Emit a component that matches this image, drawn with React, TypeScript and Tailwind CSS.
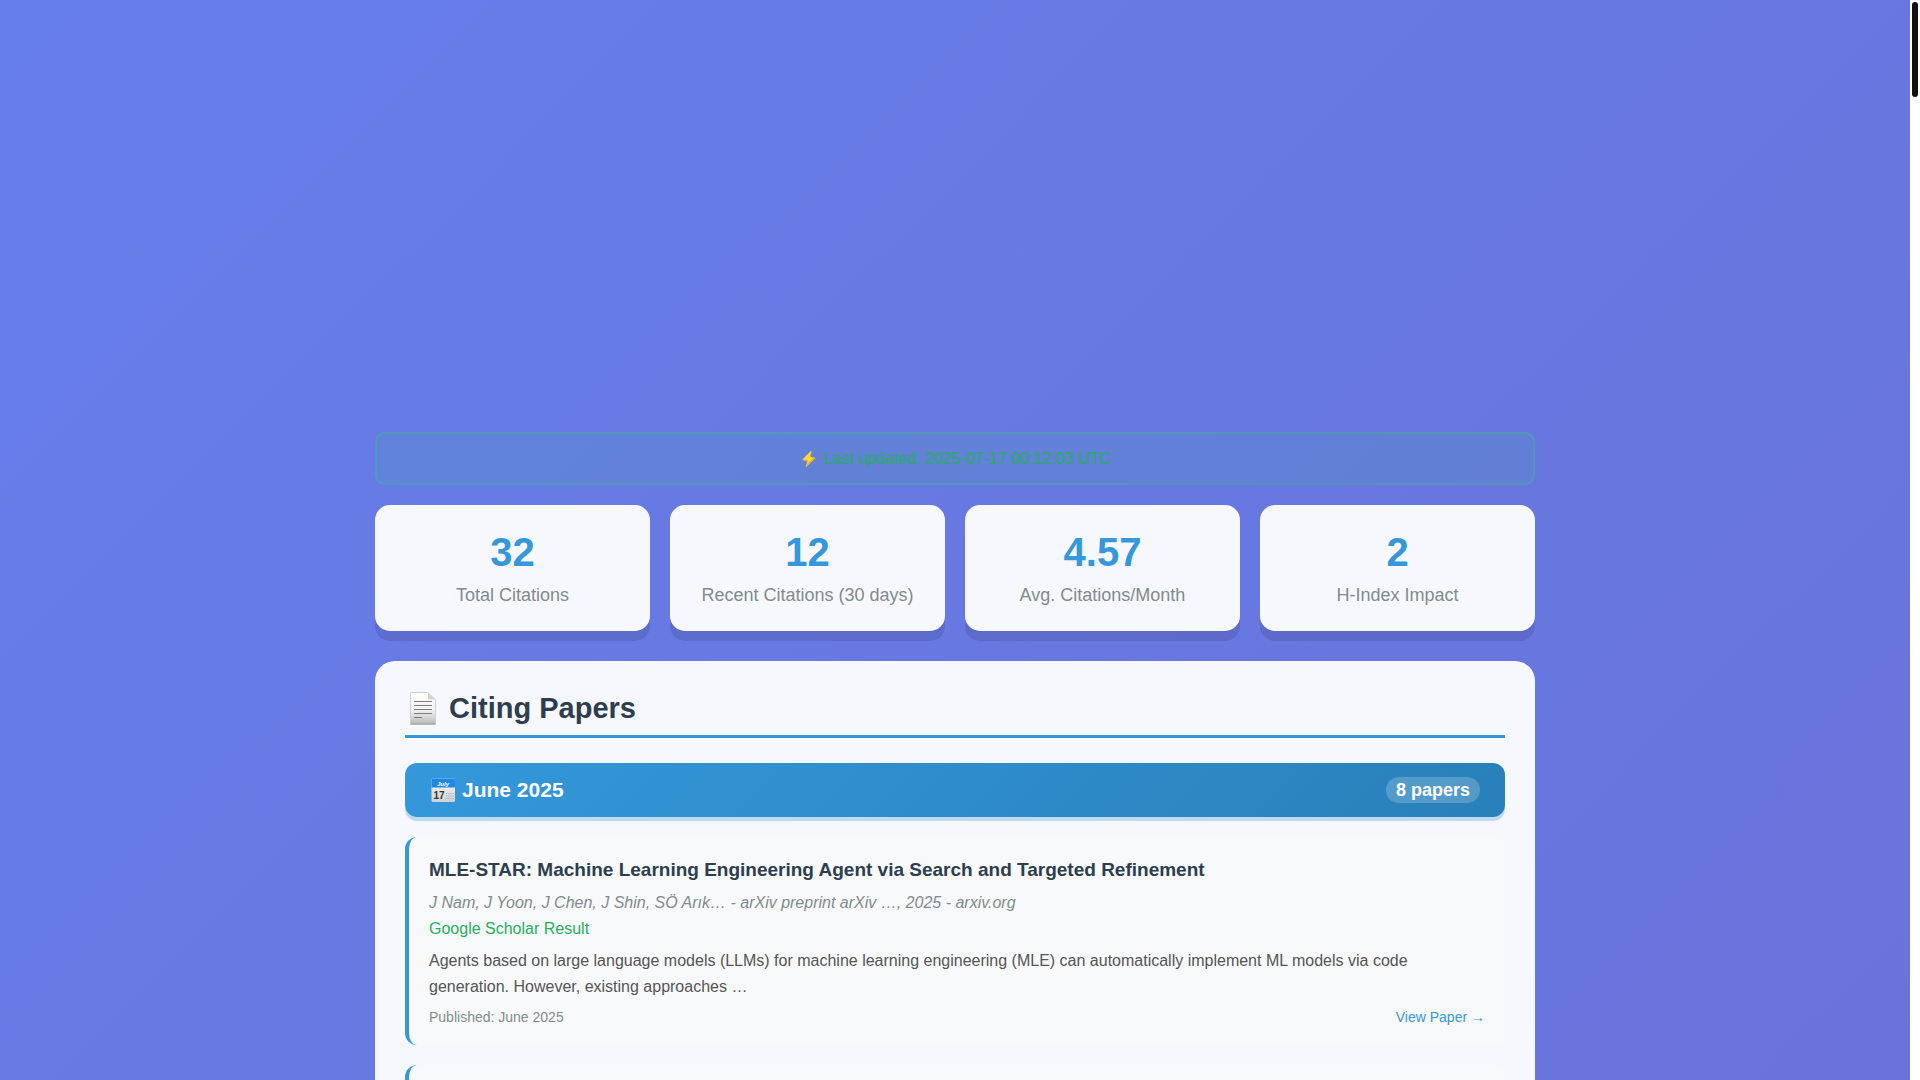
const stats = [
    { value: '32', label: 'Total Citations' },
    { value: '12', label: 'Recent Citations (30 days)' },
    { value: '4.57', label: 'Avg. Citations/Month' },
    { value: '2', label: 'H-Index Impact' }
];

const papers = [
    {
        title: 'MLE-STAR: Machine Learning Engineering Agent via Search and Targeted Refinement',
        authors: 'J Nam, J Yoon, J Chen, J Shin, SÖ Arık… - arXiv preprint arXiv …, 2025 - arxiv.org',
        venue: 'Google Scholar Result',
        abstract: 'Agents based on large language models (LLMs) for machine learning engineering (MLE) can automatically implement ML models via code generation. However, existing approaches …',
        published: 'June 2025'
    }
];

const BoltIcon = () => (
    <svg viewBox="0 0 20 20" className="size-5" aria-hidden="true">
        <path d="M12.6 1.2 3.4 10.4l5.2 1.2-2 6.8 10-9.4-5.6-1.3z" fill="#fdd835" />
        <path d="M3.4 10.4l5.2 1.2-.4 1.2-3.6-1zM6.6 18.4l10-9.4-1.6-.4-6.6 6.4zM12.6 1.2 11 7.7l1 .2z" fill="#f5a623" />
    </svg>
);

const PageIcon = () => (
    <svg viewBox="0 0 36 34" className="h-[34px] w-9" aria-hidden="true">
        <defs>
            <linearGradient id="sheet" x1="0" y1="0" x2="0" y2="1">
                <stop offset="0" stopColor="#fff" />
                <stop offset="0.55" stopColor="#f2f2f2" />
                <stop offset="1" stopColor="#b8b8b8" />
            </linearGradient>
        </defs>
        <path d="M6 1.5h16.5l8 7v24.5a.5.5 0 0 1-.5.5H6a.5.5 0 0 1-.5-.5V2a.5.5 0 0 1 .5-.5z" fill="url(#sheet)" stroke="#cfcfcf" />
        <path d="M23 1.8l7.3 6.7H24a1 1 0 0 1-1-1z" fill="#d4d4d4" />
        <path d="M9 10.5h18M9 14.5h18M9 18.5h18M9 22.5h18M9 26.5h8" stroke="#7d7d7d" />
        <path d="M5.5 33h25" stroke="#a0a0a0" />
    </svg>
);

const CalendarIcon = () => (
    <svg viewBox="0 0 26 26" className="size-[26px]" aria-hidden="true">
        <defs>
            <linearGradient id="day" x1="0" y1="0" x2="0" y2="1">
                <stop offset="0" stopColor="#fafafa" />
                <stop offset="1" stopColor="#cfd2d4" />
            </linearGradient>
        </defs>
        <rect x="1.5" y="1.5" width="23.5" height="23.5" rx="1.5" fill="url(#day)" />
        <path d="M1.5 10.5V3A1.5 1.5 0 0 1 3 1.5h20.5A1.5 1.5 0 0 1 25 3v7.5z" fill="#1e88e5" />
        <text x="13" y="8.5" fontSize="6" fontWeight="700" fontStyle="italic" textAnchor="middle" fill="#fff">July</text>
        <text x="3.5" y="22" fontSize="10" fontWeight="700" fill="#333">17</text>
        <path d="M16 16.5h8M16 19h8M16 21.5h8" stroke="#aaa" strokeDasharray="1.2 1" />
    </svg>
);

const StatCard = ({ value, label }: { value: string; label: string }) => (
    <div className="rounded-[15px] bg-[#f7f8fe] p-6 text-center shadow-[0_10px_0_rgba(0,0,0,0.1)]">
        <div className="text-[40px] leading-[46px] font-bold text-[#3498db]">{value}</div>
        <div className="mt-2 text-[18px] leading-6 text-[#7f8c8d]">{label}</div>
    </div>
);

const PaperCard = ({ paper }: { paper: (typeof papers)[number] }) => (
    <article className="rounded-xl border-l-4 border-[#3498db] bg-[#f8f9fa] p-5">
        <h3 className="mb-[7px] text-[19px] leading-[26px] font-bold text-[#2c3e50]">{paper.title}</h3>
        <p className="leading-[26px] text-[#7f8c8d] italic">{paper.authors}</p>
        <p className="leading-[26px] text-[#27ae60]">{paper.venue}</p>
        <p className="mt-1.5 leading-[26px] text-[#555]">{paper.abstract}</p>
        <div className="mt-[9px] flex items-center justify-between text-sm leading-4">
            <span className="text-[#7f8c8d]">Published: {paper.published}</span>
            <a href="#" className="text-[#3498db]">View Paper →</a>
        </div>
    </article>
);

const App = () => {
    return (
        <div className="flex h-screen overflow-hidden bg-white font-['Liberation_Sans',Arial,sans-serif] text-base">
            <main className="grow overflow-hidden bg-[linear-gradient(135deg,#667eea,#6973db)]">
                <div className="mx-auto max-w-[1200px] p-5">
                    <header className="mb-5 h-[392px]" />
                    <p className="mb-5 flex items-center justify-center gap-1 rounded-[10px] border-2 border-[#2ecc71]/30 bg-[#2ecc71]/10 py-3 leading-[25px] text-[#27ae60]">
                        <BoltIcon />
                        Last updated: 2025-07-17 00:12:03 UTC
                    </p>
                    <section className="mb-[30px] grid grid-cols-4 gap-5">
                        {stats.map((stat) => (
                            <StatCard key={stat.label} value={stat.value} label={stat.label} />
                        ))}
                    </section>
                    <section className="rounded-[20px] bg-[#f7f8fe] p-[30px]">
                        <h2 className="mb-[25px] flex items-center gap-2 border-b-3 border-[#3498db] pb-2.5 text-[29px] leading-[34px] font-bold text-[#2c3e50]">
                            <PageIcon />
                            Citing Papers
                        </h2>
                        <div className="mb-5 flex items-center justify-between rounded-xl bg-[linear-gradient(135deg,#3498db,#2980b9)] px-[25px] py-3.5 font-bold text-white shadow-[0_4px_0_rgba(52,152,219,0.3)]">
                            <h3 className="flex items-center gap-1.5 text-[21px] leading-[26px]">
                                <CalendarIcon />
                                June 2025
                            </h3>
                            <span className="rounded-full bg-white/20 px-2.5 text-[18px] leading-[26px]">8 papers</span>
                        </div>
                        <div className="flex flex-col gap-5">
                            {papers.map((paper) => (
                                <PaperCard key={paper.title} paper={paper} />
                            ))}
                            <article className="h-52 rounded-xl border-l-4 border-[#3498db] bg-[#f8f9fa]" />
                        </div>
                    </section>
                </div>
            </main>
            <div className="w-2.5 shrink-0 bg-white p-0.5">
                <div className="h-[95px] rounded-full bg-[#111]" />
            </div>
        </div>
    );
}

export default App;
